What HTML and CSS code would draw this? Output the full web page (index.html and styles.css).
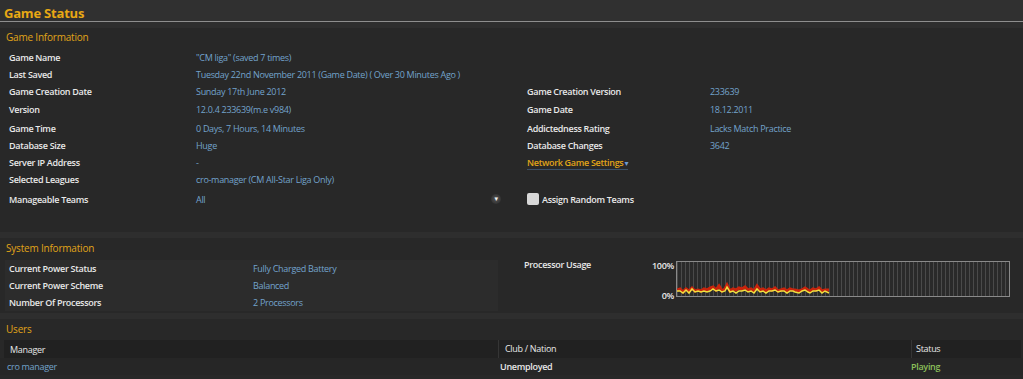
FILE: index.html
```html
<!DOCTYPE html>
<html lang="en">
<head>
    <meta charset="UTF-8">
    <title>Game Status</title>
    <link rel="stylesheet" href="styles.css">
</head>
<body>
    <div class="titulo">Game Status</div>

    <div class="painel info">
        <div class="painel-titulo">Game Information</div>
        <div class="grade">
            <div class="rot">Game Name</div><div class="val">"CM liga" (saved 7 times)</div><div></div><div></div>
            <div class="rot">Last Saved</div><div class="val">Tuesday 22nd November 2011 (Game Date) ( Over 30 Minutes Ago )</div><div></div><div></div>
            <div class="rot">Game Creation Date</div><div class="val">Sunday 17th June 2012</div><div class="rot">Game Creation Version</div><div class="val">233639</div>
            <div class="rot">Version</div><div class="val">12.0.4 233639(m.e v984)</div><div class="rot">Game Date</div><div class="val">18.12.2011</div>
            <div class="rot">Game Time</div><div class="val">0 Days, 7 Hours, 14 Minutes</div><div class="rot">Addictedness Rating</div><div class="val">Lacks Match Practice</div>
            <div class="rot">Database Size</div><div class="val">Huge</div><div class="rot">Database Changes</div><div class="val">3642</div>
            <div class="rot">Server IP Address</div><div class="val">-</div><div class="link">Network Game Settings<span class="seta">&#9662;</span></div><div></div>
            <div class="rot">Selected Leagues</div><div class="val">cro-manager (CM All-Star Liga Only)</div><div></div><div></div>
            <div class="rot">Manageable Teams</div>
            <div class="val combo"><span>All</span><span class="drop">&#9662;</span></div>
            <div class="rot check"><span class="caixa"></span>Assign Random Teams</div><div></div>
        </div>
    </div>

    <div class="painel sistema">
        <div class="painel-titulo">System Information</div>
        <div class="sis-corpo">
            <div class="sis-tabela">
                <div class="sis-linha"><span class="rot">Current Power Status</span><span class="val">Fully Charged Battery</span></div>
                <div class="sis-linha"><span class="rot">Current Power Scheme</span><span class="val">Balanced</span></div>
                <div class="sis-linha"><span class="rot">Number Of Processors</span><span class="val">2 Processors</span></div>
            </div>
            <div class="proc">
                <div class="rot proc-rot">Processor Usage</div>
                <div class="escala"><span class="rot">100%</span><span class="rot">0%</span></div>
                <div class="grafico">
                    <svg width="332" height="34" viewBox="0 0 332 34">
                        <polyline fill="none" stroke="#c8240c" stroke-width="3" points="0,28 3,27 6,30 9,27 12,29 15,26 18,29 21,28 24,29 27,27 30,28 33,26 36,25 39,28 42,24 45,29 48,27 50,23 53,29 56,27 59,28 62,26 65,27 68,25 71,28 74,27 77,29 80,24 83,28 86,27 89,29 92,27 95,28 98,26 101,29 104,28 107,27 110,29 113,27 116,28 118,28 122,29 125,28 128,26 131,28 133,29 136,27 139,28 142,26 145,29 148,28 152,28"/>
                        <polyline fill="none" stroke="#f0e040" stroke-width="1.5" points="0,29 3,29 6,31 9,28 12,31 15,27 18,30 21,29 24,30 27,29 30,30 33,29 36,27 39,29 42,28 45,30 48,29 50,25 53,30 56,29 59,31 62,29 65,29 68,28 71,30 74,29 77,31 80,27 83,30 86,29 89,31 92,29 95,29 98,28 101,30 104,29 107,29 110,31 113,29 116,29 118,30 122,31 125,29 128,28 131,30 133,31 136,29 139,29 142,28 145,31 148,29 152,31"/>
                    </svg>
                </div>
            </div>
        </div>
    </div>

    <div class="painel usuarios">
        <div class="painel-titulo">Users</div>
        <div class="tab-cab">
            <span class="col-man">Manager</span>
            <span class="col-club">Club / Nation</span>
            <span class="col-status">Status</span>
        </div>
        <div class="tab-linha">
            <span class="col-man val">cro manager</span>
            <span class="col-club">Unemployed</span>
            <span class="col-status jogando">Playing</span>
        </div>
    </div>
</body>
</html>
```

FILE: styles.css
```css
body {
    margin: 0;
    background-color: #2e2e2e;
    font-family: "Open Sans", "DejaVu Sans", sans-serif;
    font-size: 9px;
    letter-spacing: -0.3px;
    color: #e6e6e6;
    overflow: hidden;
}

.titulo {
    height: 21px;
    line-height: 26px;
    padding-left: 4px;
    font-size: 13px;
    font-weight: 700;
    letter-spacing: -0.2px;
    color: #e8a814;
    border-bottom: 1px solid #8e8e8e;
    background-color: #303030;
    margin-bottom: 6px;
}

.painel {
    background-color: #282828;
    margin-bottom: 6px;
}

.painel-titulo {
    color: #e0a418;
    font-size: 10px;
    letter-spacing: -0.2px;
    padding-left: 6px;
    height: 19px;
    line-height: 19px;
}

.rot {
    color: #e8e8e8;
    font-weight: 600;
}

.val {
    color: #73a3cc;
}

/* game information */
.info {
    height: 204px;
}

.info .painel-titulo {
    margin-bottom: 2px;
}

.grade {
    display: grid;
    grid-template-columns: 187px 331px 183px 1fr;
    grid-template-rows: 17px 17px 17px 19px 18px 17px 17px 17px 22px;
    align-items: center;
    padding-left: 9px;
}

.link {
    color: #e0a418;
    font-weight: 600;
    justify-self: start;
    border-bottom: 1px solid #3c5066;
}

.seta {
    color: #6e9bd0;
    font-size: 8px;
    margin-left: 1px;
}

.combo {
    display: flex;
    justify-content: space-between;
    align-items: center;
    padding-right: 26px;
}

.drop {
    width: 10px;
    height: 10px;
    line-height: 10px;
    text-align: center;
    border-radius: 50%;
    font-size: 7px;
    color: #f0f0f0;
    background: radial-gradient(circle, #555 0%, #333 70%, #2a2a2a 100%);
}

.check {
    display: flex;
    align-items: center;
    gap: 3px;
}

.caixa {
    width: 12px;
    height: 12px;
    border-radius: 2px;
    background-color: #d8d8d8;
}

/* system information */
.sistema {
    height: 75px;
}

.sistema .painel-titulo {
    padding-top: 1px;
}

.sis-corpo {
    display: flex;
    padding-left: 5px;
    padding-top: 2px;
}

.sis-tabela {
    width: 493px;
    background-color: #2c2c2c;
}

.sis-linha {
    display: flex;
    height: 17px;
    align-items: center;
    padding-left: 4px;
}

.sis-linha .rot {
    width: 244px;
}

.proc {
    display: flex;
    padding-left: 26px;
}

.proc-rot {
    width: 128px;
    margin-top: -2px;
}

.escala {
    display: flex;
    flex-direction: column;
    justify-content: space-between;
    align-items: flex-end;
    width: 22px;
    height: 43px;
    margin-top: -1px;
    padding-right: 2px;
}

.grafico {
    width: 332px;
    height: 34px;
    margin-top: 1px;
    border: 1px solid #8a8a8a;
    background-color: #2a2a2a;
    background-image: repeating-linear-gradient(90deg, #4a4a4a 0, #4a4a4a 1px, transparent 1px, transparent 4px);
}

.grafico svg {
    display: block;
}

/* users */
.usuarios {
    height: 62px;
    margin-bottom: 0;
}

.usuarios .painel-titulo {
    padding-top: 1px;
}

.tab-cab,
.tab-linha {
    display: flex;
    align-items: center;
    height: 18px;
}

.tab-cab {
    background-color: #212121;
    margin: 1px 2px 0 4px;
    color: #e8e8e8;
}

.tab-linha {
    background-color: #262626;
    color: #e8e8e8;
    font-weight: 600;
    height: 17px;
}

.tab-cab span {
    font-weight: 400;
}

.col-man {
    width: 488px;
    padding-left: 6px;
}

.tab-linha .col-man {
    padding-left: 7px;
    width: 487px;
    font-weight: 400;
}

.col-club {
    width: 406px;
    padding-left: 6px;
    border-left: 1px solid #353535;
    height: 18px;
    line-height: 18px;
}

.col-status {
    padding-left: 4px;
    border-left: 1px solid #353535;
    height: 18px;
    line-height: 18px;
}

.tab-linha .col-club,
.tab-linha .col-status {
    border-left: none;
    height: 17px;
    line-height: 17px;
}

.tab-linha .col-status {
    padding-left: 5px;
}

.jogando {
    color: #8cc05a;
}
```
